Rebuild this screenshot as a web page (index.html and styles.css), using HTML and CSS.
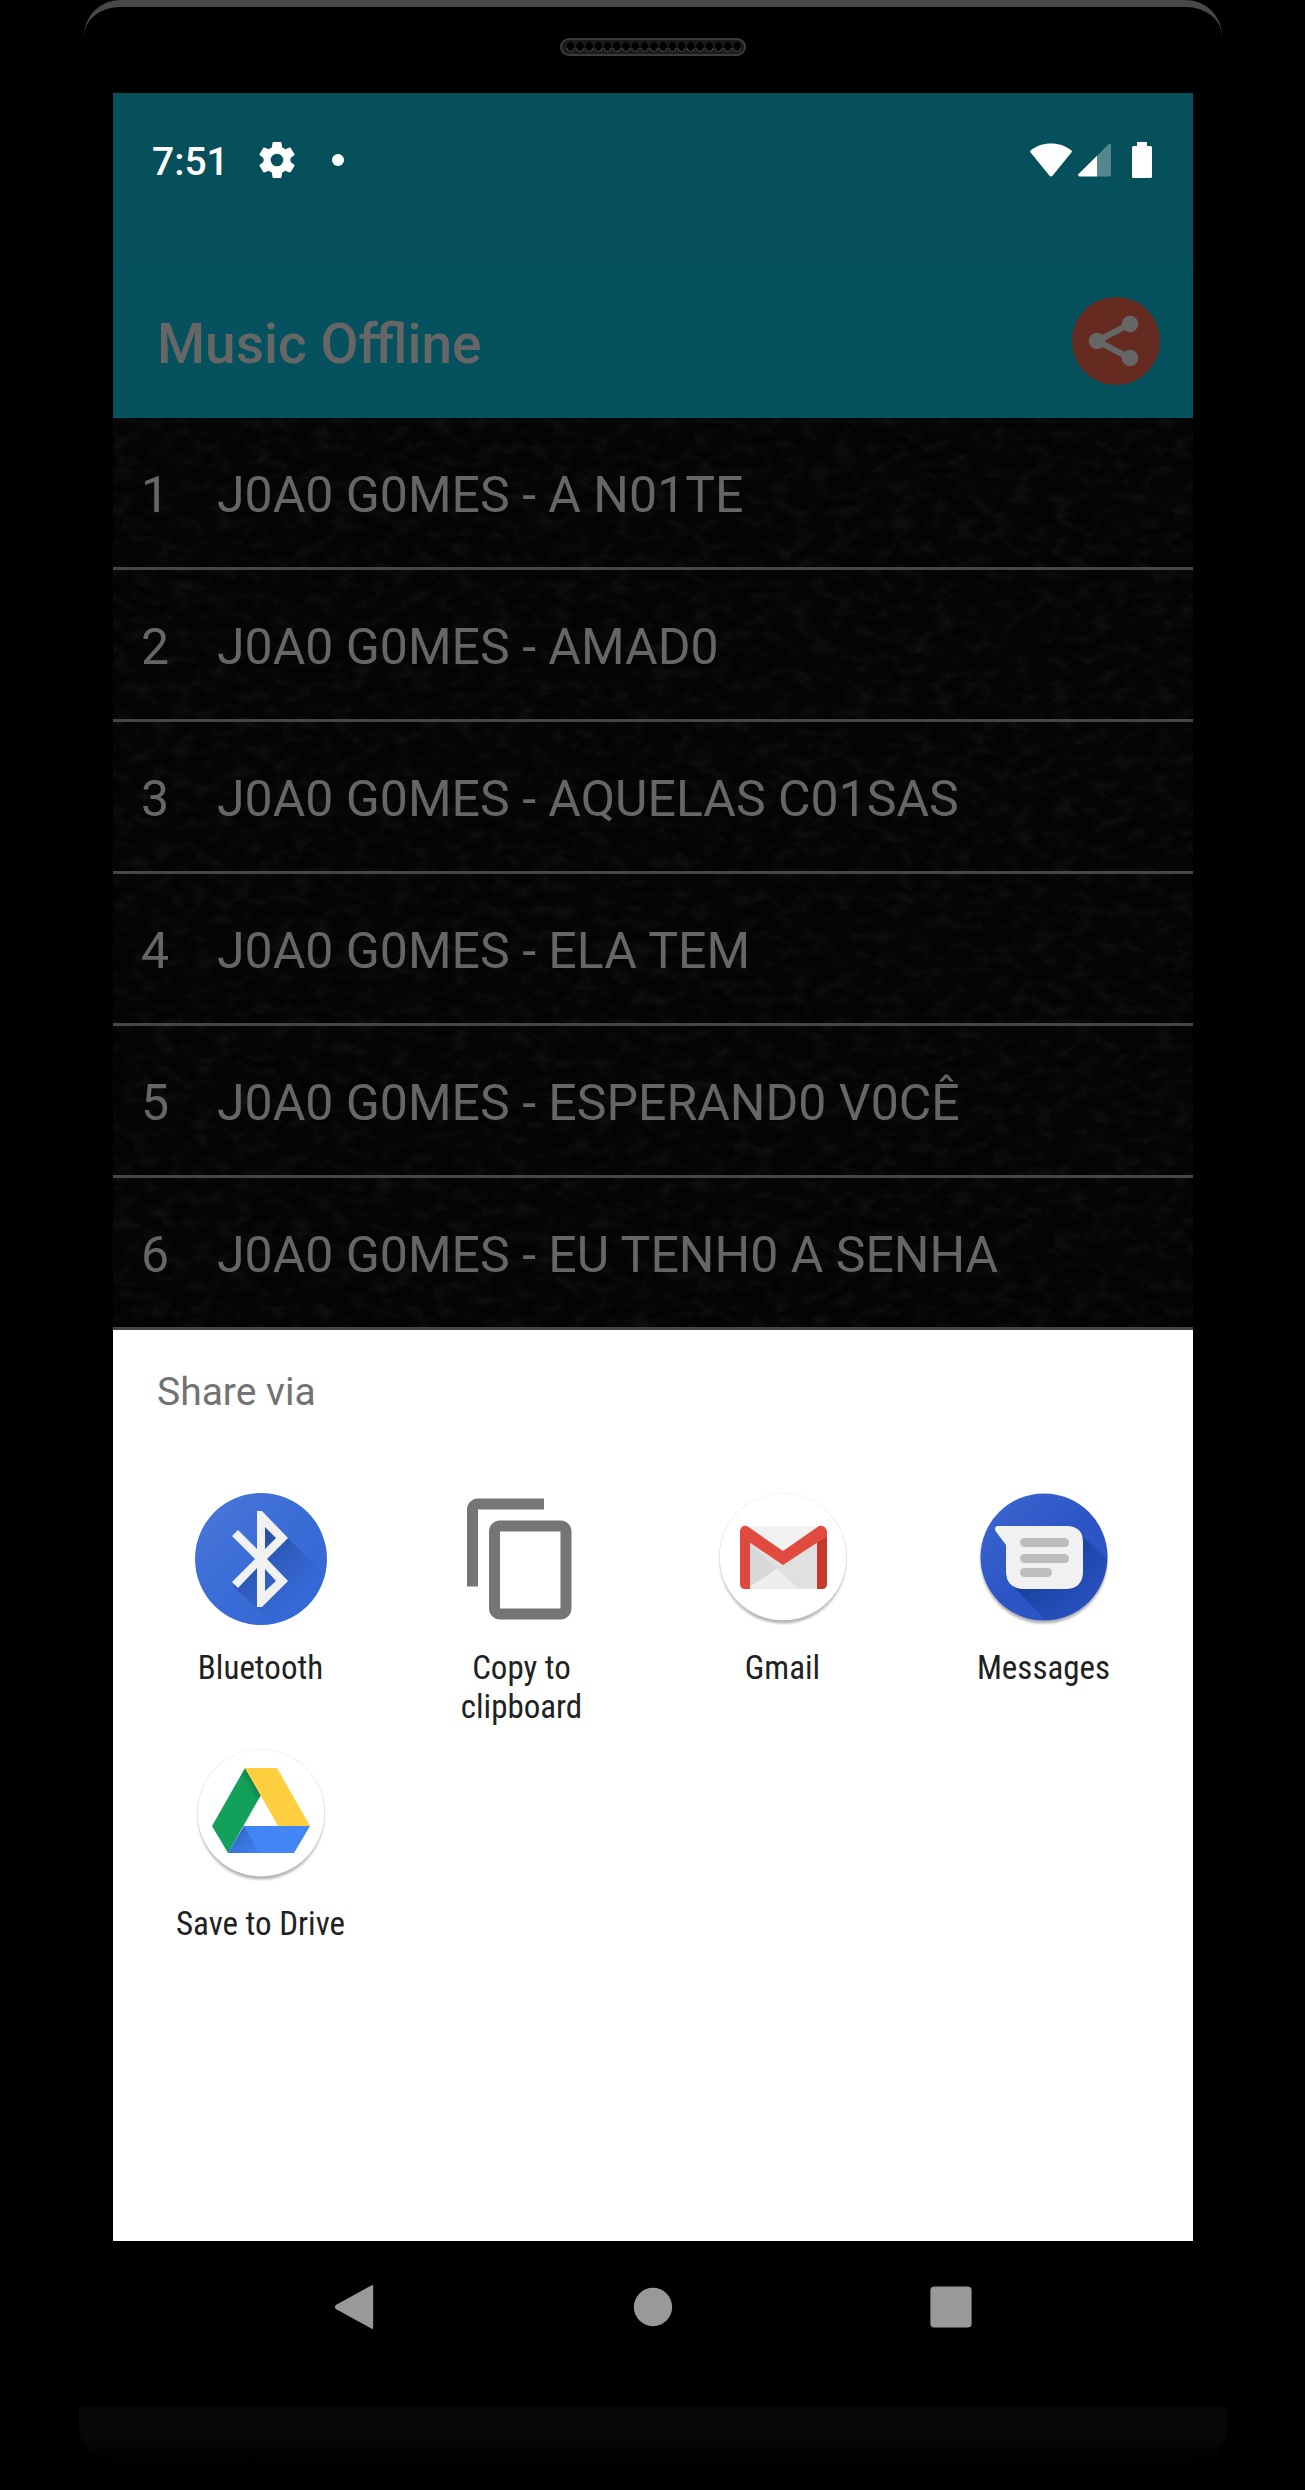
FILE: index.html
```html
<!DOCTYPE html>
<html lang="en">
<head>
<meta charset="utf-8">
<meta name="viewport" content="width=device-width, initial-scale=1">
<title>Music Offline</title>
<link rel="stylesheet" href="styles.css">
</head>
<body>
<div class="device">
  <div class="bezel-top">
    <svg class="speaker" viewBox="0 0 186 18" aria-hidden="true">
      <defs>
        <pattern id="holes" x="6" y="0" width="9.25" height="18" patternUnits="userSpaceOnUse">
          <ellipse cx="4.6" cy="9" rx="3.8" ry="5" fill="#000"/>
          <path d="M1 10a3.7 4.4 0 0 0 7.2 0" fill="none" stroke="#4c4c4c" stroke-width="1"/>
        </pattern>
      </defs>
      <rect x="1" y="1" width="184" height="16" rx="8" fill="#1b1b1b" stroke="#3c3c3c" stroke-width="2"/>
      <rect x="6" y="0" width="175" height="18" fill="url(#holes)"/>
    </svg>
  </div>

  <div class="screen">
    <div class="status-bar">
      <span class="clock">7:51</span>
      <svg class="gear" viewBox="2 2 20 20" aria-hidden="true"><path fill="#fff" d="M19.43 12.98c.04-.32.07-.64.07-.98s-.03-.66-.07-.98l2.11-1.65c.19-.15.24-.42.12-.64l-2-3.46c-.12-.22-.39-.3-.61-.22l-2.49 1c-.52-.4-1.08-.73-1.69-.98l-.38-2.65A.49.49 0 0 0 14 2h-4c-.25 0-.46.18-.49.42l-.38 2.65c-.61.25-1.17.59-1.69.98l-2.49-1c-.23-.09-.49 0-.61.22l-2 3.46c-.13.22-.07.49.12.64l2.11 1.65c-.04.32-.07.65-.07.98s.03.66.07.98l-2.11 1.65c-.19.15-.24.42-.12.64l2 3.46c.12.22.39.3.61.22l2.49-1c.52.4 1.08.73 1.69.98l.38 2.65c.03.24.24.42.49.42h4c.25 0 .46-.18.49-.42l.38-2.65c.61-.25 1.17-.59 1.69-.98l2.49 1c.23.09.49 0 .61-.22l2-3.46c.12-.22.07-.49-.12-.64l-2.11-1.65zM12 15.5a3.5 3.5 0 1 1 0-7 3.5 3.5 0 0 1 0 7z"/></svg>
      <span class="dot"></span>
      <span class="spacer"></span>
      <svg class="wifi" viewBox="0 0 42 34" aria-hidden="true"><path fill="#fff" d="M21 0.5C13 0.5 6 3.2 1 7Q-.5 8.300 .8 9.800L19.300 32.500Q21 34.300 22.700 32.500L41.200 9.800Q42.500 8.300 41 7C36 3.200 29 .5 21 .5z"/></svg>
      <svg class="signal" viewBox="0 0 33 34" aria-hidden="true"><path fill="#54868d" d="M19 12.800 30.500 1.200Q33 0 33 2.500V31.500Q33 33.500 31 33.500H19z"/><path fill="#fff" d="M19 12.800V33.500H1.500Q-.6 33.300 .3 31.200z"/></svg>
      <svg class="battery" viewBox="0 0 20 36" aria-hidden="true"><path fill="#fff" d="M5 0h10v4h3.500Q20 4 20 5.500v29Q20 36 18.500 36h-17Q0 36 0 34.500v-29Q0 4 1.500 4H5z"/></svg>
    </div>

    <header class="app-bar">
      <h1 class="app-title">Music Offline</h1>
      <button class="share-button" type="button" aria-label="Share">
        <svg viewBox="0 0 88 88" aria-hidden="true"><path d="M58 27 25 44l33 17" fill="none" stroke="#666" stroke-width="6"/><circle cx="58" cy="27" r="8.300" fill="#666"/><circle cx="25" cy="44" r="8.300" fill="#666"/><circle cx="58" cy="61" r="8.300" fill="#666"/></svg>
      </button>
    </header>

    <main class="songs">
      <svg class="texture" aria-hidden="true">
        <filter id="stone" x="0" y="0" width="100%" height="100%" color-interpolation-filters="sRGB">
          <feTurbulence type="fractalNoise" baseFrequency="0.05 0.08" numOctaves="5" seed="7"/>
          <feColorMatrix values="0 0 0 0 1  0 0 0 0 1  0 0 0 0 1  0.11 0 0 0 -0.05"/>
        </filter>
        <rect width="100%" height="100%" filter="url(#stone)"/>
      </svg>
      <ol class="song-list">
        <li class="song"><span class="song-number">1</span><span>J0A0 G0MES - A N01TE</span></li>
        <li class="song"><span class="song-number">2</span><span>J0A0 G0MES - AMAD0</span></li>
        <li class="song"><span class="song-number">3</span><span>J0A0 G0MES - AQUELAS C01SAS</span></li>
        <li class="song"><span class="song-number">4</span><span>J0A0 G0MES - ELA TEM</span></li>
        <li class="song"><span class="song-number">5</span><span>J0A0 G0MES - ESPERAND0 V0CÊ</span></li>
        <li class="song"><span class="song-number">6</span><span>J0A0 G0MES - EU TENH0 A SENHA</span></li>
      </ol>
    </main>

    <section class="sheet" aria-labelledby="sheet-title">
      <h2 class="sheet-title" id="sheet-title">Share via</h2>
      <div class="targets">
        <button class="target" type="button">
          <svg viewBox="0 0 132 132" aria-hidden="true">
            <defs>
              <linearGradient id="bt" x1="0" y1="0" x2="1" y2="1"><stop offset="0" stop-color="#4a78d9"/><stop offset=".5" stop-color="#3a6cd6"/><stop offset="1" stop-color="#3367d6"/></linearGradient>
              <linearGradient id="bt-shade" gradientUnits="userSpaceOnUse" x1="60" y1="60" x2="105" y2="105"><stop offset="0" stop-color="#1c3e8c" stop-opacity=".6"/><stop offset="1" stop-color="#2450ae" stop-opacity="0"/></linearGradient>
              <clipPath id="bt-clip"><circle cx="66" cy="66" r="66"/></clipPath>
            </defs>
            <circle cx="66" cy="66" r="66" fill="url(#bt)"/>
            <g clip-path="url(#bt-clip)"><path fill="url(#bt-shade)" d="M66 20 93 45 145 97V150H100L38 93 60 70z"/></g>
            <path fill="#f1f1f1" fill-rule="evenodd" d="M62 18H67L93 45 72 66 93 88 67 114H62V75L43 95 37 89 60 66 37 43 43 37 62 56zM70 34V56L81 45zM70 76V98L81 88z"/>
          </svg>
          <span>Bluetooth</span>
        </button>
        <button class="target" type="button">
          <svg viewBox="0 0 24 24" aria-hidden="true"><path fill="#757575" d="M16 1H4c-1.100 0-2 .9-2 2v14h2V3h12V1zm3 4H8c-1.100 0-2 .9-2 2v14c0 1.100.9 2 2 2h11c1.100 0 2-.9 2-2V7c0-1.100-.9-2-2-2zm0 16H8V7h11v14z"/></svg>
          <span>Copy to clipboard</span>
        </button>
        <button class="target" type="button">
          <svg viewBox="0 0 132 132" aria-hidden="true">
            <defs>
              <linearGradient id="rim" x1="0" y1="0" x2="0" y2="1"><stop offset="0" stop-color="#f2f2f2"/><stop offset=".5" stop-color="#e0e0e0"/><stop offset="1" stop-color="#b4b4b4"/></linearGradient>
              <filter id="soft" x="-10%" y="-10%" width="120%" height="120%"><feGaussianBlur stdDeviation="1"/></filter>
            </defs>
            <circle cx="66" cy="67" r="63.500" fill="url(#rim)" filter="url(#soft)"/>
            <circle cx="66" cy="64" r="64" fill="url(#rim)"/>
            <circle cx="66" cy="64" r="63.300" fill="#fff"/>
            <path fill="#e8e8e8" d="M28 33h76v63H28z"/>
            <path fill="#f2f2f2" d="M28 33h76L66 60z"/>
            <path fill="#d8d8d8" d="M32 49 60 76 32 94z"/>
            <path fill="#e0e0e0" d="M32 49 66 71 100 49V95H80z"/>
            <path fill="#eee" d="M32 95 60 76 80 95z"/>
            <path fill="#dc4a3d" d="M33 48v48h-5q-5 0-5-5V38z"/>
            <path fill="#c6392b" d="M100 48v48h5q5 0 5-5V38z"/>
            <path fill="#e04a3f" d="M23 44V38Q24 32 30 33L66 58 102 33Q108 32 110 38V44L101 49 66 72 32 49z"/>
          </svg>
          <span>Gmail</span>
        </button>
        <button class="target" type="button">
          <svg viewBox="0 0 132 132" aria-hidden="true">
            <defs>
              <linearGradient id="msg" x1="0" y1="0" x2="1" y2="1"><stop offset="0" stop-color="#3d67d0"/><stop offset=".5" stop-color="#2c56c6"/><stop offset="1" stop-color="#2a54c4"/></linearGradient>
              <linearGradient id="msg-shade" gradientUnits="userSpaceOnUse" x1="70" y1="70" x2="115" y2="115"><stop offset="0" stop-color="#173c96" stop-opacity=".8"/><stop offset="1" stop-color="#2148b4" stop-opacity=".3"/></linearGradient>
              <clipPath id="msg-clip"><circle cx="66" cy="64" r="63"/></clipPath>
            </defs>
            <circle cx="66" cy="67" r="63.500" fill="#b4b4b4" filter="url(#soft)"/>
            <circle cx="66" cy="64" r="63.500" fill="url(#msg)"/>
            <g clip-path="url(#msg-clip)"><path fill="url(#msg-shade)" d="M103 42 140 77V150H90L32 90z"/></g>
            <path fill="#f1f1f1" d="M19 33H90Q105 34 105 49V80Q104 95 89 96H44Q29 95 28 80V52L17.500 38Q16 34 19 33z"/>
            <g fill="#bdbdbd"><rect x="42" y="45" width="49" height="9" rx="4.500"/><rect x="42" y="61" width="49" height="9" rx="4.500"/><rect x="42" y="75" width="32" height="9" rx="4.500"/></g>
          </svg>
          <span>Messages</span>
        </button>
        <button class="target" type="button">
          <svg viewBox="0 0 132 132" aria-hidden="true">
            <defs>
              <linearGradient id="dr-blue" gradientUnits="userSpaceOnUse" x1="42" y1="80" x2="58" y2="104"><stop offset="0" stop-color="#3367c8"/><stop offset="1" stop-color="#407fee"/></linearGradient>
              <linearGradient id="dr-green" gradientUnits="userSpaceOnUse" x1="48" y1="44" x2="62" y2="36"><stop offset=".4" stop-color="#12a05a"/><stop offset="1" stop-color="#0e8048"/></linearGradient>
            </defs>
            <circle cx="66" cy="67" r="63.500" fill="url(#rim)" filter="url(#soft)"/>
            <circle cx="66" cy="64" r="64" fill="url(#rim)"/>
            <circle cx="66" cy="64" r="63.300" fill="#fff"/>
            <path fill="url(#dr-green)" d="M50 19 66 46 33 104 17 77z"/>
            <path fill="#ffcf40" d="M50 19H82L115 77H83z"/>
            <path fill="#4285f4" d="M49 77H115L99 104H33z"/>
            <path fill="url(#dr-blue)" d="M49 77 64 104H33z"/>
          </svg>
          <span>Save to Drive</span>
        </button>
      </div>
    </section>

    <nav class="nav-bar" aria-label="System">
      <button type="button" aria-label="Back"><svg viewBox="0 0 48 48" aria-hidden="true"><path fill="#999" d="M41 1.500q2-1 2 1v43q0 2-2 1L4 26q-2-2 0-4z"/></svg></button>
      <button type="button" aria-label="Home"><svg viewBox="0 0 48 48" aria-hidden="true"><circle cx="24" cy="24" r="20" fill="#999"/></svg></button>
      <button type="button" aria-label="Overview"><svg viewBox="0 0 48 48" aria-hidden="true"><rect x="2.500" y="2.500" width="43" height="43" rx="4" fill="#999"/></svg></button>
    </nav>
  </div>
  <div class="chin"></div>
</div>
</body>
</html>
```
FILE: styles.css
```css
* {
  box-sizing: border-box;
}

body {
  margin: 0;
  background: #000;
  font-family: Roboto, "Liberation Sans", sans-serif;
}

button {
  margin: 0;
  padding: 0;
  border: 0;
  background: none;
  color: inherit;
  font: inherit;
  cursor: pointer;
}

svg {
  display: block;
}

.device {
  padding: 0 77px 24px 79px;
}

.bezel-top {
  display: flex;
  justify-content: center;
  height: 93px;
  margin: 0 6px 0 5px;
  padding-top: 31px;
  border-top: 7px solid #484848;
  border-radius: 36px 36px 0 0;
}

.speaker {
  width: 186px;
  height: 18px;
}

.screen {
  margin: 0 35px 0 34px;
}

.status-bar {
  display: flex;
  align-items: center;
  height: 170px;
  padding: 0 41px 36px 39px;
  background: #05505a;
  color: #fff;
}

.clock {
  padding-top: 4px;
  font-size: 39px;
  font-weight: 500;
  line-height: 46px;
}

.gear {
  width: 36px;
  height: 36px;
  margin-left: 30px;
}

.dot {
  width: 12px;
  height: 12px;
  margin-left: 37px;
  border-radius: 50%;
  background: #fff;
}

.spacer {
  flex: 1;
}

.wifi {
  width: 42px;
  height: 34px;
  margin-right: 6px;
}

.signal {
  width: 33px;
  height: 34px;
  margin-right: 21px;
}

.battery {
  width: 20px;
  height: 36px;
}

.app-bar {
  display: flex;
  align-items: center;
  justify-content: space-between;
  height: 155px;
  padding: 0 33px 0 44px;
  background: #05515d;
}

.app-title {
  margin: 0;
  padding-top: 6px;
  color: #666;
  font-size: 55px;
  font-weight: 500;
  line-height: 64px;
}

.share-button {
  width: 88px;
  height: 88px;
  border-radius: 50%;
  background: #662b20;
}

.songs {
  position: relative;
  background: #040404;
}

.texture {
  position: absolute;
  inset: 0;
  width: 100%;
  height: 100%;
}

.song-list {
  position: relative;
  margin: 0;
  padding: 0;
  list-style: none;
}

.song {
  display: flex;
  align-items: center;
  height: 152px;
  padding: 4px 28px 0;
  border-bottom: 3px solid #464646;
  color: #666;
  font-size: 50px;
  line-height: 60px;
}

.song-number {
  width: 76px;
}

.sheet {
  min-height: 911px;
  padding: 38px 19px 0 17px;
  background: #fff;
}

.sheet-title {
  margin: 0 27px;
  color: #737373;
  font-size: 39px;
  font-weight: 400;
  line-height: 48px;
}

.targets {
  display: grid;
  grid-template-columns: repeat(4, 1fr);
  padding-top: 66px;
}

.target {
  display: flex;
  flex-direction: column;
  align-items: center;
  gap: 23px;
  height: 256px;
  padding: 11px 44px;
  color: #212121;
  font-family: "Roboto Condensed", Roboto, "Liberation Sans Narrow", sans-serif;
  font-size: 33px;
  line-height: 39px;
}

.target svg {
  width: 132px;
  height: 132px;
}

.nav-bar {
  display: flex;
  justify-content: center;
  padding: 0 93px;
  background: #000;
}

.nav-bar button {
  display: flex;
  flex: 1;
  align-items: center;
  justify-content: center;
  height: 132px;
}

.nav-bar svg {
  width: 46px;
  height: 46px;
}

.chin {
  height: 58px;
  margin-top: 34px;
  border-radius: 0 0 40px 40px;
  background: linear-gradient(#070707 50%, #000);
}
```
